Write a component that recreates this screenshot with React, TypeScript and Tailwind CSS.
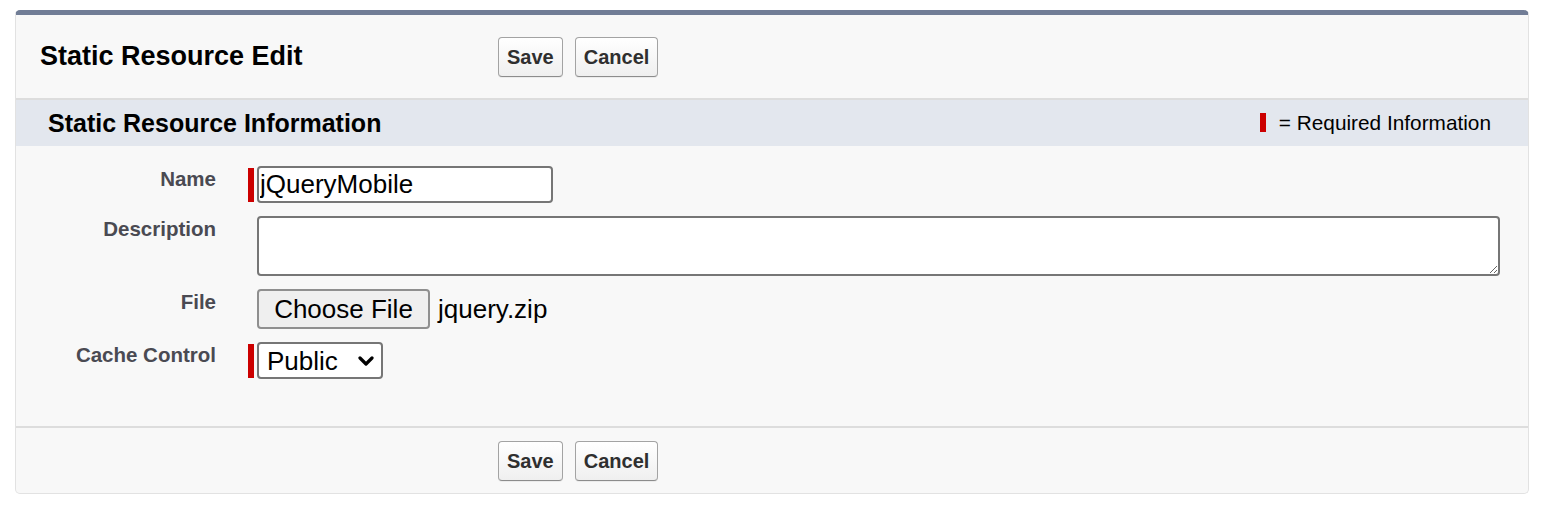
import React from "react";

const FONT = "[font-family:'Liberation_Sans',Arial,sans-serif]";

function ActionButton({ label }: { label: string }) {
  return (
    <button
      type="button"
      className="h-[40px] rounded-[4px] border border-[#a3a3a3] border-b-[#8c8c8c] bg-[linear-gradient(180deg,#ffffff,#efefef)] px-[8px] text-[20px] font-bold leading-none text-[#2f2f2f] shadow-[0_1px_0_rgba(0,0,0,0.05)]"
    >
      {label}
    </button>
  );
}

function ButtonBar() {
  return (
    <div className="flex items-center gap-[12px]">
      <ActionButton label="Save" />
      <ActionButton label="Cancel" />
    </div>
  );
}

function RequiredMark() {
  return <span className="mt-[2px] block h-[34px] w-[6px] bg-[#cc0000]" />;
}

function FieldRow({
  label,
  required,
  children,
}: {
  label: string;
  required?: boolean;
  children: React.ReactNode;
}) {
  return (
    <div className="flex items-start">
      <div className="w-[200px] pt-[1px] text-right text-[20.5px] font-bold leading-[24px] text-[#4a4a52]">
        {label}
      </div>
      <div className="ml-[32px] w-[9px] shrink-0">{required && <RequiredMark />}</div>
      {children}
    </div>
  );
}

export default function App() {
  return (
    <div className={`h-[510px] w-full bg-white pt-[10px] ${FONT}`}>
      <div className="ml-[15px] w-[1514px] overflow-hidden rounded-[5px] border border-t-[5px] border-[#e2e2e2] border-t-[#717d96] bg-[#f8f8f8]">
        {/* page header */}
        <div className="flex h-[85px] items-center border-b-2 border-[#dddddd] pl-[24px]">
          <h1 className="w-[458px] text-[27px] font-bold leading-none text-black">
            Static Resource Edit
          </h1>
          <ButtonBar />
        </div>

        {/* section header */}
        <div className="flex h-[46px] items-center justify-between bg-[#e3e7ee] pl-[32px] pr-[37px]">
          <h2 className="text-[25px] font-bold leading-none text-black">
            Static Resource Information
          </h2>
          <div className="flex items-center gap-[13px] text-[20.8px] leading-none text-black">
            <span className="block h-[19px] w-[6px] bg-[#cc0000]" />
            <span>= Required Information</span>
          </div>
        </div>

        {/* form */}
        <div className="flex flex-col gap-[13px] pb-[47px] pt-[20px]">
          <FieldRow label="Name" required>
            <input
              type="text"
              defaultValue="jQueryMobile"
              className="h-[37px] w-[296px] rounded-[4px] border-2 border-[#767676] bg-white px-[1px] text-[26px] leading-none text-black outline-none"
            />
          </FieldRow>

          <FieldRow label="Description">
            <textarea className="h-[60px] w-[1243px] rounded-[4px] border-2 border-[#767676] bg-white px-[2px] text-[26px] text-black outline-none" />
          </FieldRow>

          <FieldRow label="File">
            <div className="flex items-center gap-[8px]">
              <span className="flex h-[40px] w-[173px] items-center justify-center rounded-[4px] border-2 border-[#8f8f8f] bg-[#efefef] text-[26px] leading-none text-black">
                Choose File
              </span>
              <span className="text-[26px] leading-none text-black">jquery.zip</span>
            </div>
          </FieldRow>

          <FieldRow label="Cache Control" required>
            <div className="flex h-[37px] w-[126px] items-center justify-between rounded-[4px] border-2 border-[#767676] bg-white pl-[8px] pr-[7px] text-[26px] leading-none text-black">
              <span>Public</span>
              <svg width="16" height="10" viewBox="0 0 16 10" aria-hidden="true">
                <path d="M2 2 L8 8 L14 2" fill="none" stroke="#000" strokeWidth="3.2" strokeLinecap="round" strokeLinejoin="round" />
              </svg>
            </div>
          </FieldRow>
        </div>

        {/* footer */}
        <div className="flex h-[67px] items-center border-t-2 border-[#dddddd] pl-[482px]">
          <ButtonBar />
        </div>
      </div>
    </div>
  );
}
